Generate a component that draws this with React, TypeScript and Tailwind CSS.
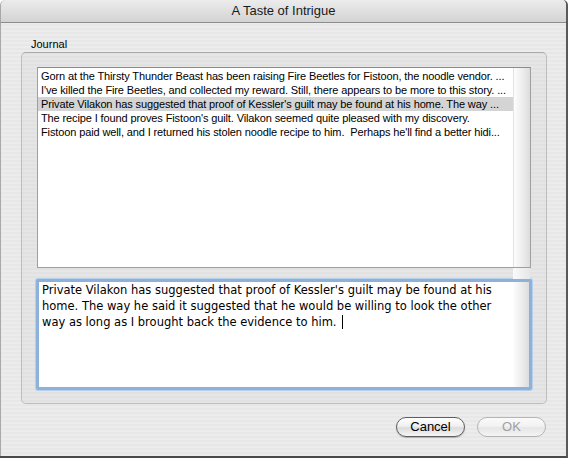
import React from "react";

const rows = [
  "Gorn at the Thirsty Thunder Beast has been raising Fire Beetles for Fistoon, the noodle vendor. ...",
  "I've killed the Fire Beetles, and collected my reward. Still, there appears to be more to this story. ...",
  "Private Vilakon has suggested that proof of Kessler's guilt may be found at his home. The way ...",
  "The recipe I found proves Fistoon's guilt. Vilakon seemed quite pleased with my discovery.",
  "Fistoon paid well, and I returned his stolen noodle recipe to him.  Perhaps he'll find a better hidi...",
];

export default function App() {
  return (
    <div
      className="w-[568px] h-[458px] overflow-hidden flex flex-col bg-[#ececec] border-r-2 border-b-2 border-r-[#5a5a5a] border-b-[#4a4a4a] rounded-t-[5px]"
      style={{ fontFamily: '"Liberation Sans", Arial, sans-serif' }}
    >
      {/* title bar */}
      <div className="h-[23px] shrink-0 flex items-center justify-center bg-[linear-gradient(#ececec,#d3d3d3)] border-b border-[#8c8c8c] rounded-t-[5px] border-l border-l-[#a8a8a8] text-[13px] text-[#1a1a1a] whitespace-pre">
        A Taste of Intrigue
      </div>

      {/* body */}
      <div className="flex-1 flex flex-col border-l border-[#a8a8a8] bg-[repeating-linear-gradient(0deg,#ececec_0px,#ececec_2px,#e7e7e7_2px,#e7e7e7_4px)]">
        <div className="pl-[30px] pt-[15px] h-[29px] text-[11px] text-[#000] leading-[13px]">Journal</div>

        <div className="ml-[20px] w-[526px] h-[352px] rounded-[5px] border border-[#bdbdbd] border-t-[#a9a9a9] bg-black/[0.025] pt-[14px] pl-[15px] relative">
          {/* list */}
          <div className="w-[494px] h-[201px] bg-white border border-[#9f9f9f] border-t-[#8a8a8a] flex">
            <div className="flex-1 min-w-0 pt-[1px] text-[11px] leading-[14px] tracking-[-0.12px] text-black overflow-hidden">
              {rows.map((r, i) => (
                <div
                  key={i}
                  className={`h-[14px] pl-[3px] whitespace-pre ${i === 2 ? "bg-[#d4d4d4]" : ""}`}
                >
                  {r}
                </div>
              ))}
            </div>
            <div className="w-[17px] shrink-0 bg-[linear-gradient(90deg,#fdfdfd,#ebebeb_60%,#dcdcdc)] border-l border-[#e2e2e2]" />
          </div>

          {/* gap strip */}
          <div className="h-[11px] w-[494px] flex justify-end">
            <div className="w-[17px] mr-[1px] bg-[linear-gradient(90deg,#fafafa,#e6e6e6)]" />
          </div>

          {/* text area */}
          <div className="w-[496px] h-[111px] -ml-[1px] rounded-[2px] border-[3px] border-[#8cb1db] shadow-[0_0_0_1px_#b8cfe9] bg-white flex">
            <div
              className="flex-1 pl-[3px] pt-0 text-[11.5px] leading-[16px] text-black"
              style={{ fontFamily: '"DejaVu Sans", Verdana, sans-serif' }}
            >
              <div className="whitespace-pre">Private Vilakon has suggested that proof of Kessler's guilt may be found at his</div>
              <div className="whitespace-pre">home. The way he said it suggested that he would be willing to look the other</div>
              <div className="whitespace-pre flex items-center">
                way as long as I brought back the evidence to him.{" "}
                <span className="inline-block w-[1px] h-[14px] bg-black ml-[2px]" />
              </div>
            </div>
            <div className="w-[16px] bg-[linear-gradient(90deg,#fdfdfd,#ebebeb_60%,#dcdcdc)]" />
          </div>
        </div>

        {/* buttons */}
        <div className="flex justify-end gap-[12px] pr-[20px] pt-[13px]">
          <button className="w-[69px] h-[20px] rounded-full border border-[#5e5e5e] bg-[linear-gradient(#ffffff,#f0f0f0_45%,#dcdcdc_55%,#f6f6f6)] shadow-[0_1px_1px_rgba(0,0,0,0.25)] text-[13px] leading-[18px] text-black">
            Cancel
          </button>
          <button className="w-[69px] h-[20px] rounded-full border border-[#b4b4b4] bg-[linear-gradient(#fafafa,#f2f2f2_45%,#e6e6e6_55%,#f4f4f4)] text-[13px] leading-[18px] text-[#a0a0a0]">
            OK
          </button>
        </div>
      </div>
    </div>
  );
}
